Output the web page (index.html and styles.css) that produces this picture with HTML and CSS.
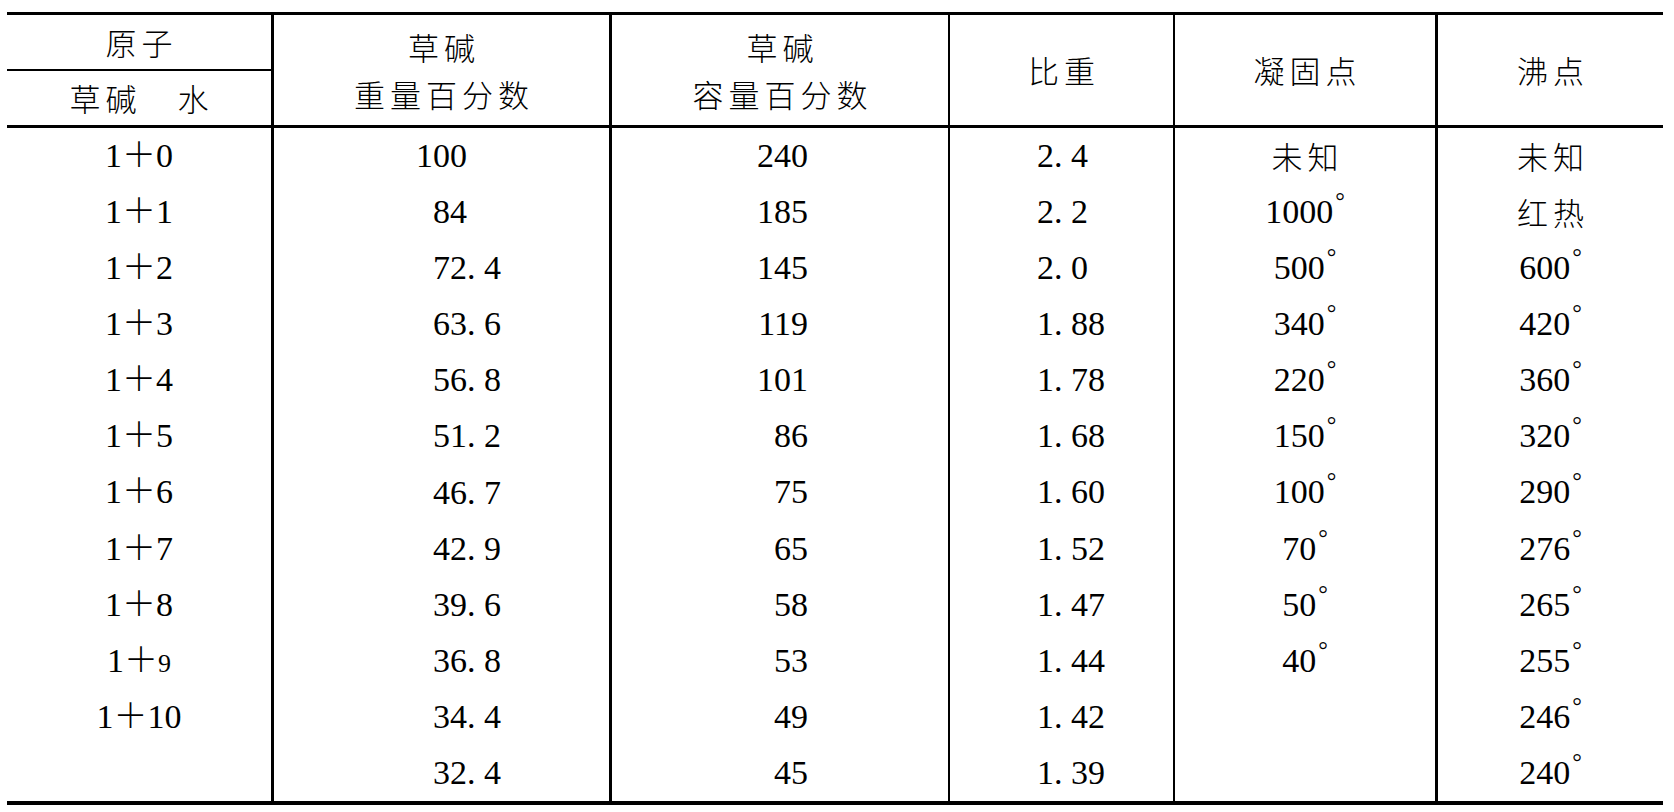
FILE: index.html
```html
<!DOCTYPE html>
<html lang="zh">
<head>
<meta charset="utf-8">
<title>草碱与水</title>
<link rel="stylesheet" href="styles.css">
</head>
<body>
<div class="table">
  <div class="c k1 h h-top"><div>原子</div></div>
  <div class="c k2 h span"><div>草碱<br>重量百分数</div></div>
  <div class="c k3 h span"><div>草碱<br>容量百分数</div></div>
  <div class="c k4 h span"><div>比重</div></div>
  <div class="c k5 h span"><div>凝固点</div></div>
  <div class="c k6 h span"><div>沸点</div></div>
  <div class="c k1 h"><div>草碱　水</div></div>

  <div class="c k1">1<span class="plus">＋</span>0</div>
  <div class="c k2 dec"><span class="i">100</span><span class="f"></span></div>
  <div class="c k3 r">240</div>
  <div class="c k4 l">2. 4</div>
  <div class="c k5 cj">未知</div>
  <div class="c k6 cj">未知</div>

  <div class="c k1">1<span class="plus">＋</span>1</div>
  <div class="c k2 dec"><span class="i">84</span><span class="f"></span></div>
  <div class="c k3 r">185</div>
  <div class="c k4 l">2. 2</div>
  <div class="c k5">1000<span class="deg">°</span></div>
  <div class="c k6 cj">红热</div>

  <div class="c k1">1<span class="plus">＋</span>2</div>
  <div class="c k2 dec"><span class="i">72</span><span class="f">. 4</span></div>
  <div class="c k3 r">145</div>
  <div class="c k4 l">2. 0</div>
  <div class="c k5">500<span class="deg">°</span></div>
  <div class="c k6">600<span class="deg">°</span></div>

  <div class="c k1">1<span class="plus">＋</span>3</div>
  <div class="c k2 dec"><span class="i">63</span><span class="f">. 6</span></div>
  <div class="c k3 r">119</div>
  <div class="c k4 l">1. 88</div>
  <div class="c k5">340<span class="deg">°</span></div>
  <div class="c k6">420<span class="deg">°</span></div>

  <div class="c k1">1<span class="plus">＋</span>4</div>
  <div class="c k2 dec"><span class="i">56</span><span class="f">. 8</span></div>
  <div class="c k3 r">101</div>
  <div class="c k4 l">1. 78</div>
  <div class="c k5">220<span class="deg">°</span></div>
  <div class="c k6">360<span class="deg">°</span></div>

  <div class="c k1">1<span class="plus">＋</span>5</div>
  <div class="c k2 dec"><span class="i">51</span><span class="f">. 2</span></div>
  <div class="c k3 r">86</div>
  <div class="c k4 l">1. 68</div>
  <div class="c k5">150<span class="deg">°</span></div>
  <div class="c k6">320<span class="deg">°</span></div>

  <div class="c k1">1<span class="plus">＋</span>6</div>
  <div class="c k2 dec"><span class="i">46</span><span class="f">. 7</span></div>
  <div class="c k3 r">75</div>
  <div class="c k4 l">1. 60</div>
  <div class="c k5">100<span class="deg">°</span></div>
  <div class="c k6">290<span class="deg">°</span></div>

  <div class="c k1">1<span class="plus">＋</span>7</div>
  <div class="c k2 dec"><span class="i">42</span><span class="f">. 9</span></div>
  <div class="c k3 r">65</div>
  <div class="c k4 l">1. 52</div>
  <div class="c k5">70<span class="deg">°</span></div>
  <div class="c k6">276<span class="deg">°</span></div>

  <div class="c k1">1<span class="plus">＋</span>8</div>
  <div class="c k2 dec"><span class="i">39</span><span class="f">. 6</span></div>
  <div class="c k3 r">58</div>
  <div class="c k4 l">1. 47</div>
  <div class="c k5">50<span class="deg">°</span></div>
  <div class="c k6">265<span class="deg">°</span></div>

  <div class="c k1">1<span class="plus">＋</span><span class="sm">9</span></div>
  <div class="c k2 dec"><span class="i">36</span><span class="f">. 8</span></div>
  <div class="c k3 r">53</div>
  <div class="c k4 l">1. 44</div>
  <div class="c k5">40<span class="deg">°</span></div>
  <div class="c k6">255<span class="deg">°</span></div>

  <div class="c k1">1<span class="plus">＋</span>10</div>
  <div class="c k2 dec"><span class="i">34</span><span class="f">. 4</span></div>
  <div class="c k3 r">49</div>
  <div class="c k4 l">1. 42</div>
  <div class="c k5"></div>
  <div class="c k6">246<span class="deg">°</span></div>

  <div class="c k1"></div>
  <div class="c k2 dec"><span class="i">32</span><span class="f">. 4</span></div>
  <div class="c k3 r">45</div>
  <div class="c k4 l">1. 39</div>
  <div class="c k5"></div>
  <div class="c k6">240<span class="deg">°</span></div>
</div>
</body>
</html>
```
FILE: styles.css
```css
html, body {
  margin: 0;
  padding: 0;
  background: #fff;
}

body {
  font-family: "Liberation Serif", "Noto Sans CJK SC", serif;
  color: #000;
}

.table {
  display: grid;
  grid-template-columns: 264px 338px 339px 225px 262px 228px;
  grid-template-rows: 56px 57px repeat(12, 56.08px);
  width: 1656px;
  margin: 12px 0 0 7px;
  border-top: 3px solid #000;
  border-bottom: 4px solid #000;
}

.c {
  box-sizing: border-box;
  display: block;
  text-align: center;
  font-size: 34px;
  line-height: 56px;
  white-space: pre;
}

.k2 { border-left: 3px solid #000; }
.k3 { border-left: 3px solid #000; }
.k4 { border-left: 2px solid #000; }
.k5 { border-left: 2px solid #000; }
.k6 { border-left: 3px solid #000; }

.h {
  display: flex;
  align-items: center;
  justify-content: center;
  font-family: "Noto Sans CJK SC", sans-serif;
  font-weight: 300;
  font-size: 31px;
  letter-spacing: 5px;
  padding-left: 5px;
  line-height: 47.5px;
  border-bottom: 3px solid #000;
}

.h-top {
  border-bottom: 2px solid #000;
}

.span {
  grid-row: span 2;
}

.cj {
  font-family: "Noto Sans CJK SC", sans-serif;
  font-weight: 300;
  font-size: 31px;
  letter-spacing: 5px;
  padding-left: 5px;
}

.plus {
  font-family: "Noto Sans CJK SC", sans-serif;
  font-weight: 300;
  line-height: 0;
}

.sm {
  font-size: 26px;
  line-height: 0;
}

.dec {
  display: grid;
  grid-template-columns: 193px auto;
  justify-content: start;
  align-items: center;
}

.dec .i {
  text-align: right;
}

.r {
  text-align: right;
  padding-right: 140px;
}

.l {
  text-align: left;
  padding-left: 87px;
}

.deg {
  font-size: 24px;
  line-height: 0;
  vertical-align: 14px;
  margin-left: 2px;
}
```
